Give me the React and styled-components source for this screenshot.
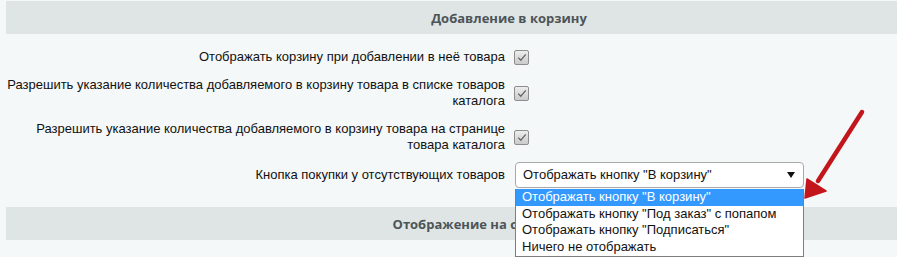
import React from 'react';
import styled, { createGlobalStyle } from 'styled-components';

const GlobalStyle = createGlobalStyle`
  html, body {
    margin: 0;
    padding: 0;
    background: #f4f8f8;
  }
`;

const options = [
    'Отображать кнопку "В корзину"',
    'Отображать кнопку "Под заказ" с попапом',
    'Отображать кнопку "Подписаться"',
    'Ничего не отображать',
];

const Checkbox = () => (
    <CheckBox>
        <svg width="10" height="9" viewBox="0 0 10 9">
            <path d="M1.2 4.6 L3.8 7.2 L8.8 1.4" fill="none" stroke="#666" strokeWidth="1.3" />
        </svg>
    </CheckBox>
);

const App = () => {
    return (
        <Page>
            <GlobalStyle />
            <Section>
                <Header>Добавление в корзину</Header>
                <Rows>
                    <Row>
                        <Label>Отображать корзину при добавлении в неё товара</Label>
                        <Control><Checkbox /></Control>
                    </Row>
                    <Row>
                        <Label>
                            Разрешить указание количества добавляемого в корзину товара в списке товаров<br />каталога
                        </Label>
                        <Control><Checkbox /></Control>
                    </Row>
                    <Row>
                        <Label>
                            Разрешить указание количества добавляемого в корзину товара на странице<br />товара каталога
                        </Label>
                        <Control><Checkbox /></Control>
                    </Row>
                    <Row $pull={3}>
                        <Label>Кнопка покупки у отсутствующих товаров</Label>
                        <Control>
                            <SelectWrap>
                                <SelectBox>
                                    {options[0]}
                                    <svg width="8" height="6" viewBox="0 0 8 6">
                                        <path d="M0 0 H8 L4 6 Z" fill="#111" />
                                    </svg>
                                </SelectBox>
                                <Dropdown>
                                    {options.map((o, i) => (
                                        <Option key={o} $active={i === 0}>{o}</Option>
                                    ))}
                                </Dropdown>
                            </SelectWrap>
                        </Control>
                    </Row>
                </Rows>
                <Header>Отображение на странице товара</Header>
            </Section>
            <Pointer width="80" height="105" viewBox="0 0 80 105">
                <line x1="67" y1="7" x2="23" y2="76" stroke="#c3161c" strokeWidth="4.5" strokeLinecap="round" />
                <path d="M10 93 L12 74 L31 86 Z" fill="#c3161c" stroke="#c3161c" strokeWidth="1.5" strokeLinejoin="round" />
            </Pointer>
        </Page>
    );
};

const Page = styled.div`
    position: relative;
    height: 257px;
    overflow: hidden;
    padding: 1px 0 0 6px;
    box-sizing: border-box;
    font-family: "Liberation Sans", Arial, sans-serif;
`;

const Section = styled.div`
    width: 891px;
`;

const Header = styled.div`
    height: 33px;
    background: #dfe5e5;
    display: flex;
    align-items: center;
    justify-content: center;
    padding-left: 115px;
    font-family: "Open Sans", "Liberation Sans", sans-serif;
    font-size: 13px;
    font-weight: 700;
    color: #4d5457;
    white-space: nowrap;
`;

const Rows = styled.div`
    display: flex;
    flex-direction: column;
    gap: 12px;
    padding: 15px 0 19px;
`;

const Row = styled.div`
    display: grid;
    grid-template-columns: 503px 1fr;
    column-gap: 5px;
    align-items: center;
    margin-top: ${p => (p.$pull ? -p.$pull : 0)}px;
`;

const Label = styled.div`
    text-align: right;
    padding-right: 4px;
    font-size: 13px;
    line-height: 16px;
    color: #111;
    white-space: nowrap;
`;

const Control = styled.div`
    display: flex;
    align-items: center;
`;

const CheckBox = styled.span`
    width: 13px;
    height: 13px;
    border: 1px solid #8e8e8e;
    border-radius: 2px;
    background: linear-gradient(#ececec, #cbcbcb);
    display: flex;
    align-items: center;
    justify-content: center;
`;

const SelectWrap = styled.div`
    position: relative;
    margin-left: 1px;
    width: 289px;
`;

const SelectBox = styled.div`
    height: 26px;
    box-sizing: border-box;
    border: 1px solid #a9a9a9;
    border-radius: 4px;
    background: #fff;
    display: flex;
    align-items: center;
    justify-content: space-between;
    padding: 0 8px 1px 7px;
    font-size: 13px;
    color: #111;
`;

const Dropdown = styled.div`
    position: absolute;
    top: 27px;
    left: 0;
    width: 289px;
    box-sizing: border-box;
    border: 1px solid #7e7e7e;
    border-top: none;
    background: #fff;
    z-index: 2;
`;

const Option = styled.div`
    height: 16.7px;
    line-height: 16px;
    padding-left: 6px;
    font-size: 13px;
    color: ${p => (p.$active ? '#fff' : '#111')};
    background: ${p => (p.$active ? '#3399ff' : 'transparent')};
`;

const Pointer = styled.svg`
    position: absolute;
    left: 795px;
    top: 105px;
    z-index: 3;
`;

export default App;
